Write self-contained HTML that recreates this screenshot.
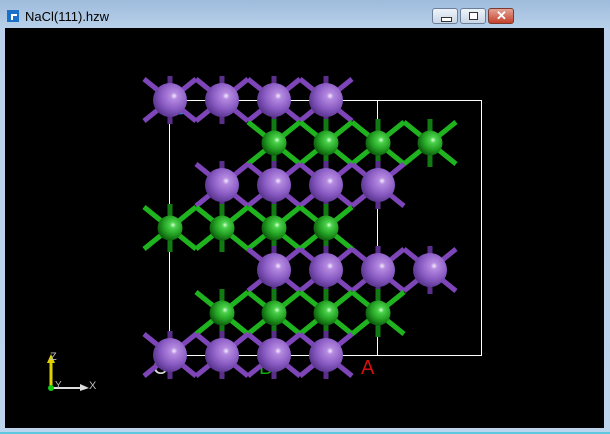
<!DOCTYPE html>
<html><head><style>
html,body{margin:0;padding:0;}
body{width:610px;height:434px;overflow:hidden;background:linear-gradient(#9fbcdc,#b9d1ea 30px,#bcd4ec);position:relative;font-family:"Liberation Sans",sans-serif;}
.t{position:absolute;left:25px;top:9px;font-size:13px;color:#000;}
.ic{position:absolute;left:7px;top:10px;width:12px;height:12px;background:#1b6fc8;}
.ic:after{content:"";position:absolute;left:4px;top:4px;width:6px;height:6px;background:#fff;}
.ic:before{content:"";position:absolute;left:6px;top:6px;width:6px;height:6px;background:#1b6fc8;z-index:1}
.b{position:absolute;top:8px;height:16px;border:1px solid #6b7f98;border-radius:3px;background:linear-gradient(#eef3f9,#c9d6e6);box-sizing:border-box;}
.cl{background:linear-gradient(#e5a294,#c4402b);border-color:#7a3a30;}
.view{position:absolute;left:5px;top:28px;width:599px;height:400px;background:#000;}
</style></head><body>
<div class="ic"></div><div class="t">NaCl(111).hzw</div>
<div class="b" style="left:432px;width:26px"><div style="position:absolute;left:8px;top:8px;width:9px;height:3px;background:#fff;border:1px solid #333"></div></div>
<div class="b" style="left:460px;width:26px"><div style="position:absolute;left:8px;top:3px;width:7px;height:6px;border:1px solid #333;background:#fff"></div></div>
<div class="b cl" style="left:488px;width:26px"><div style="position:absolute;left:7px;top:-1px;color:#fff;font-weight:bold;font-size:13px">✕</div></div>
<div class="view"></div>
<div style="position:absolute;left:0;top:432px;width:610px;height:2px;background:#5ec8e0"></div>
<svg width="610" height="434" style="position:absolute;left:0;top:0">
<defs>
<radialGradient id="gp" cx="0.62" cy="0.38" r="0.65"><stop offset="0" stop-color="#f4ecff"/><stop offset="0.15" stop-color="#b58ae0"/><stop offset="0.6" stop-color="#8a5cc4"/><stop offset="1" stop-color="#5a3590"/></radialGradient>
<radialGradient id="gg" cx="0.62" cy="0.38" r="0.65"><stop offset="0" stop-color="#d8ffd8"/><stop offset="0.18" stop-color="#4cd24c"/><stop offset="0.6" stop-color="#22a022"/><stop offset="1" stop-color="#0c5a0c"/></radialGradient>
<g id="sp" stroke-width="5"><path d="M-26-21L26 21M-26 21L26-21" stroke="#7d45b8"/><path d="M0-24V24" stroke="#5a2f8c"/></g>
<g id="sg" stroke-width="5"><path d="M-26-21L26 21M-26 21L26-21" stroke="#1fb41f"/><path d="M0-24V24" stroke="#127a12"/></g>
<circle id="ap" r="17" fill="url(#gp)"/>
<circle id="ag" r="12.5" fill="url(#gg)"/>
</defs>
<g fill="none" stroke="#fff" stroke-width="1"><rect x="169.5" y="100.5" width="312" height="255"/><path d="M377.5 100V355"/></g>
<text x="153" y="374" fill="#ddd" font-size="20">C</text>
<text x="259" y="374" fill="#1a1" font-size="20">B</text>
<path d="M176 112q4 3 9 0" stroke="#1a8ad0" stroke-width="2" fill="none"/>
<g>
<use href="#sp" x="170" y="100"/><use href="#sp" x="222" y="100"/><use href="#sp" x="274" y="100"/><use href="#sp" x="326" y="100"/>
<use href="#sg" x="274" y="143"/><use href="#sg" x="326" y="143"/><use href="#sg" x="378" y="143"/><use href="#sg" x="430" y="143"/>
<use href="#sp" x="222" y="185"/><use href="#sp" x="274" y="185"/><use href="#sp" x="326" y="185"/><use href="#sp" x="378" y="185"/>
<use href="#sg" x="170" y="228"/><use href="#sg" x="222" y="228"/><use href="#sg" x="274" y="228"/><use href="#sg" x="326" y="228"/>
<use href="#sp" x="274" y="270"/><use href="#sp" x="326" y="270"/><use href="#sp" x="378" y="270"/><use href="#sp" x="430" y="270"/>
<use href="#sg" x="222" y="313"/><use href="#sg" x="274" y="313"/><use href="#sg" x="326" y="313"/><use href="#sg" x="378" y="313"/>
<use href="#sp" x="170" y="355"/><use href="#sp" x="222" y="355"/><use href="#sp" x="274" y="355"/><use href="#sp" x="326" y="355"/>
</g>
<g>
<use href="#ap" x="170" y="100"/><use href="#ap" x="222" y="100"/><use href="#ap" x="274" y="100"/><use href="#ap" x="326" y="100"/>
<use href="#ag" x="274" y="143"/><use href="#ag" x="326" y="143"/><use href="#ag" x="378" y="143"/><use href="#ag" x="430" y="143"/>
<use href="#ap" x="222" y="185"/><use href="#ap" x="274" y="185"/><use href="#ap" x="326" y="185"/><use href="#ap" x="378" y="185"/>
<use href="#ag" x="170" y="228"/><use href="#ag" x="222" y="228"/><use href="#ag" x="274" y="228"/><use href="#ag" x="326" y="228"/>
<use href="#ap" x="274" y="270"/><use href="#ap" x="326" y="270"/><use href="#ap" x="378" y="270"/><use href="#ap" x="430" y="270"/>
<use href="#ag" x="222" y="313"/><use href="#ag" x="274" y="313"/><use href="#ag" x="326" y="313"/><use href="#ag" x="378" y="313"/>
<use href="#ap" x="170" y="355"/><use href="#ap" x="222" y="355"/><use href="#ap" x="274" y="355"/><use href="#ap" x="326" y="355"/>
</g>
<text x="361" y="374" fill="#d01010" font-size="20" font-family="Liberation Sans">A</text>
<path d="M51 388V362" stroke="#e0d000" stroke-width="3"/>
<path d="M47 363L51 354L55 363Z" fill="#e0d000"/>
<path d="M51 388H82" stroke="#ddd" stroke-width="2"/>
<path d="M80 384L89 388L80 391Z" fill="#ddd"/>
<circle cx="51" cy="388" r="3" fill="#1c1" />
<text x="50" y="360" fill="#bbb" font-size="11">Z</text>
<text x="55" y="388" fill="#bbb" font-size="10">Y</text>
<text x="89" y="389" fill="#bbb" font-size="11">X</text>
</svg>
</body></html>
